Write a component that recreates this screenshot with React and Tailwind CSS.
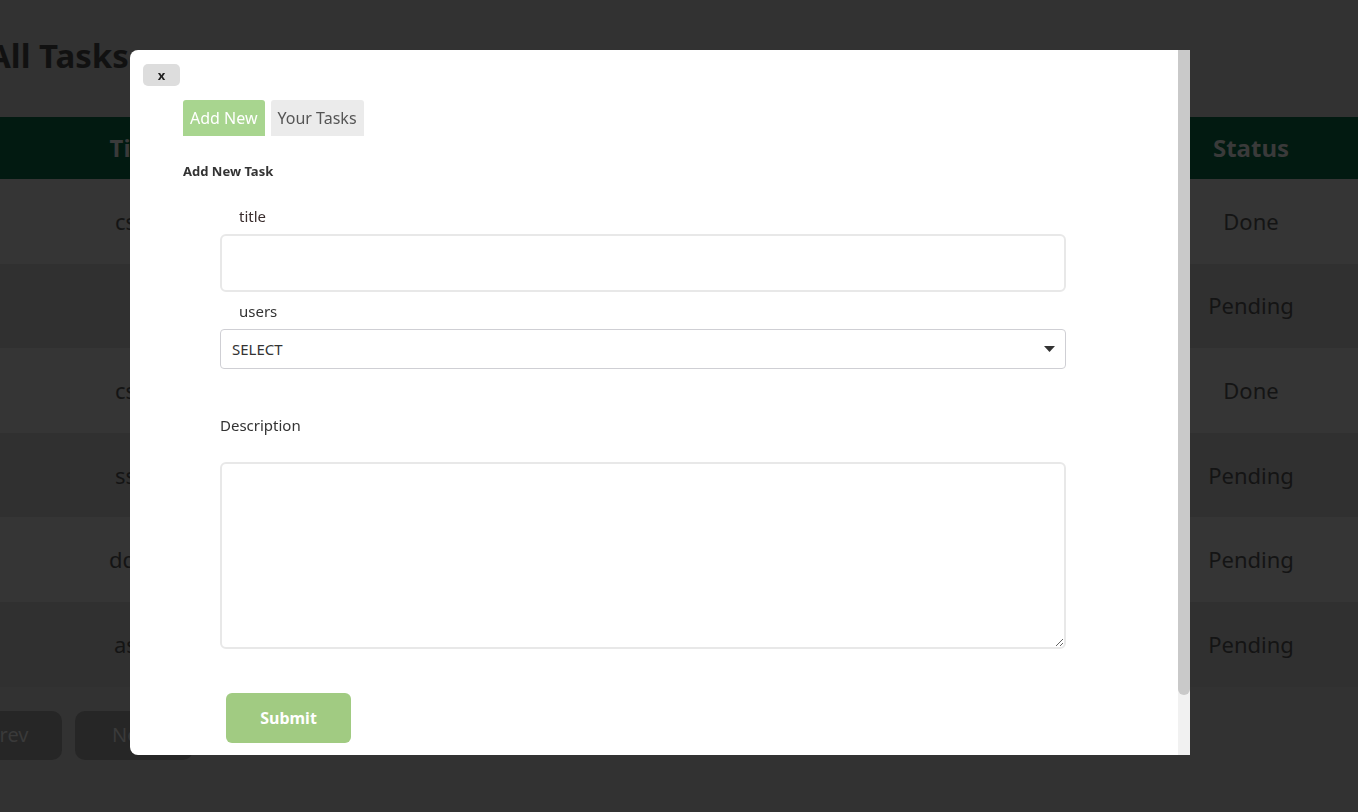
import React from 'react';

const rows = [
  { title: 'cscs', status: 'Done' },
  { title: '', status: 'Pending' },
  { title: 'cscs', status: 'Done' },
  { title: 'ssss', status: 'Pending' },
  { title: 'dddd', status: 'Pending' },
  { title: 'asdf', status: 'Pending' },
];

const font = { fontFamily: '"Comic Sans MS", "Noto Sans", sans-serif' };

const Background = () => (
  <div className="min-h-[812px] w-full bg-[#323232] overflow-hidden">
    <h1 className="pt-[36px] ml-[-12px] h-[117px] text-[33px] font-bold leading-[40px] text-[#111111]">All Tasks</h1>

    <div className="grid grid-cols-[272px_1fr_214px] h-[62px] bg-[#021a11] items-center text-[24px] font-bold text-[#3a3a3a]">
      <div className="text-center">Title</div>
      <div className="text-center">Description</div>
      <div className="text-center">Status</div>
    </div>
    {rows.map((r, i) => (
      <div
        key={i}
        className={`grid grid-cols-[272px_1fr_214px] h-[84.6px] items-center text-[22px] text-[#141414] ${
          i % 2 === 0 ? 'bg-[#353535]' : 'bg-[#303030]'
        }`}
      >
        <div className="text-center">{r.title}</div>
        <div className="text-center"></div>
        <div className="text-center">{r.status}</div>
      </div>
    ))}

    <div className="flex gap-[13px] mt-[24px] ml-[-46px]">
      <button className="w-[108px] h-[49px] rounded-[10px] bg-[#262626] text-[20px] text-[#3a3a3a]">Prev</button>
      <button className="w-[118px] h-[49px] rounded-[10px] bg-[#262626] text-[20px] text-[#3a3a3a]">Next</button>
    </div>
  </div>
);

const Modal = () => (
  <div className="flex w-[1060px] h-[705px] bg-white rounded-l-[8px] overflow-hidden">
    <div className="flex-1 flex flex-col pl-[13px] pt-[14px]">
      <button className="w-[37px] h-[22px] rounded-[5px] bg-[#dddddd] text-[13px] font-bold leading-none text-[#222222]">x</button>

      <div className="flex gap-[6px] ml-[40px] mt-[14px]">
        <button className="h-[36px] px-[7px] rounded-t-[3px] bg-[#a8d58f] text-[16px] text-white">Add New</button>
        <button className="h-[36px] px-[7px] rounded-t-[3px] bg-[#ebebeb] text-[16px] text-[#555555]">Your Tasks</button>
      </div>

      <div className="ml-[40px] mt-[27px] text-[13px] font-bold leading-[16px] text-[#333333]">Add New Task</div>

      <div className="ml-[77px] w-[846px] flex flex-col">
        <label className="ml-[19px] mt-[27px] text-[15px] leading-[20px] text-[#3a2d2d]">title</label>
        <input className="mt-[8px] h-[58px] w-full rounded-[6px] border-2 border-[#e8e8e8] outline-none" />

        <label className="ml-[19px] mt-[9px] text-[15px] leading-[20px] text-[#333333]">users</label>
        <div className="relative mt-[8px]">
          <select className="appearance-none h-[40px] w-full rounded-[4px] border border-[#cfcfd4] bg-white pl-[11px] text-[15px] text-[#333333] outline-none" style={font}>
            <option>SELECT</option>
          </select>
          <svg className="absolute right-[11px] top-[17px]" width="11" height="6" viewBox="0 0 11 6">
            <path d="M0 0 L11 0 L5.5 6 Z" fill="#333333" />
          </svg>
        </div>

        <label className="mt-[46px] text-[15px] leading-[20px] text-[#333333]">Description</label>
        <textarea className="mt-[27px] h-[187px] w-full rounded-[6px] border-2 border-[#e8e8e8] outline-none" />

        <button className="mt-[44px] ml-[6px] w-[125px] h-[50px] rounded-[6px] bg-[#a1cb82] text-[16px] font-bold text-white">Submit</button>
      </div>
    </div>

    <div className="w-[12px] h-full bg-[#f1f1f1]">
      <div className="h-[645px] w-full bg-[#c9c9c9] rounded-b-[6px]" />
    </div>
  </div>
);

export default function App() {
  return (
    <div className="relative w-full min-h-[812px]" style={font}>
      <Background />
      <div className="fixed inset-0 pl-[130px] pt-[50px]">
        <Modal />
      </div>
    </div>
  );
}
